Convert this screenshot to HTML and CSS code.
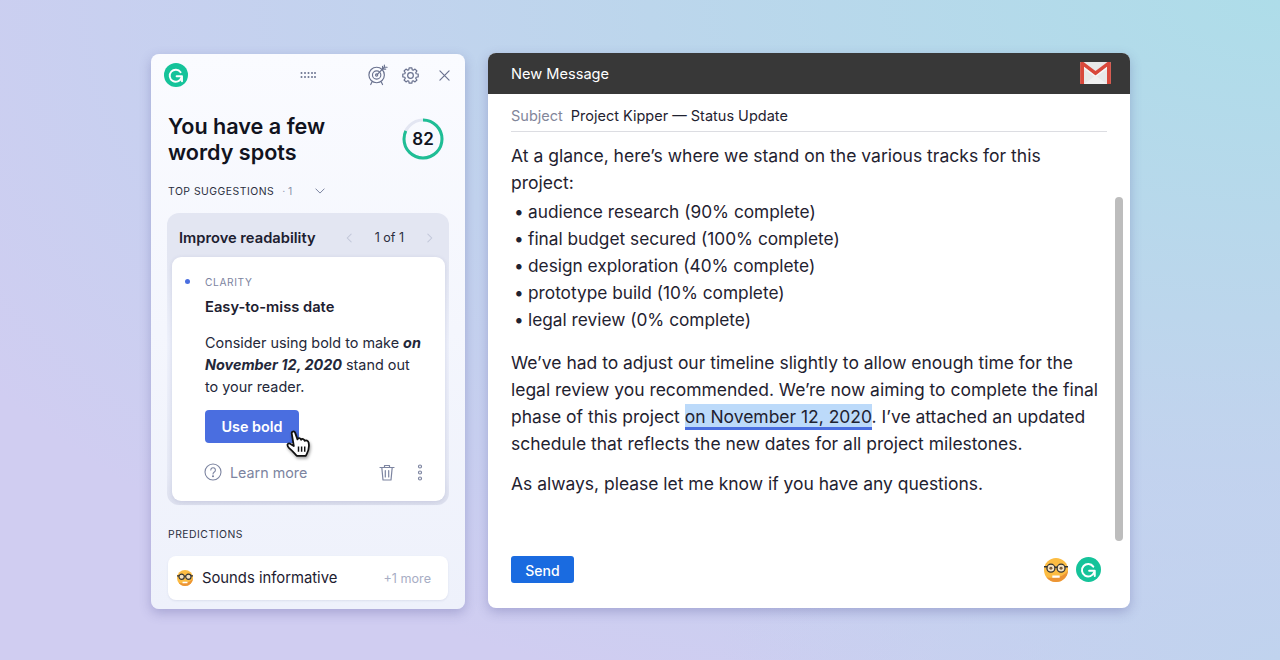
FILE: index.html
```html
<!DOCTYPE html>
<html lang="en">
<head>
<meta charset="utf-8">
<title>Grammarly</title>
<link rel="stylesheet" href="styles.css">
</head>
<body>
<main class="stage">
  <aside class="side">
    <header class="side-top">
      <svg class="g-logo" width="24" height="24" viewBox="0 0 24 24"><circle cx="12" cy="12" r="12" fill="#15c39a"/><path d="M16.600 9.200A6 6 0 1 0 17.400 14.600" fill="none" stroke="#fff" stroke-width="1.900" stroke-linecap="round"/><path d="M12.600 13.200H18V18.200" fill="none" stroke="#fff" stroke-width="1.900" stroke-linecap="round" stroke-linejoin="round"/></svg>
      <svg class="grip" width="16" height="8" viewBox="0 0 16 8"><g fill="#6b7390"><circle cx="1.500" cy="2" r="1"/><circle cx="5" cy="2" r="1"/><circle cx="8.500" cy="2" r="1"/><circle cx="12" cy="2" r="1"/><circle cx="15" cy="2" r="1"/><circle cx="1.500" cy="6" r="1"/><circle cx="5" cy="6" r="1"/><circle cx="8.500" cy="6" r="1"/><circle cx="12" cy="6" r="1"/><circle cx="15" cy="6" r="1"/></g></svg>
      <div class="top-icons">
        <svg class="target" width="20" height="22" viewBox="0 0 22 24" fill="none" stroke="#6b7390" stroke-width="1.300" stroke-linecap="round"><circle cx="9.500" cy="12" r="8.500"/><circle cx="9.500" cy="12" r="4.600"/><circle cx="9.500" cy="12" r="1.200"/><path d="M10 11.500 18 3.500M16 2.500V5.500H19.500M18 1V3.500H21M4.500 19.500 3 22.500M14.500 19.500 16 22.500"/></svg>
        <svg class="gear" width="17" height="17" viewBox="0 0 18 18" fill="none" stroke="#6b7390" stroke-width="1.300" stroke-linejoin="round"><path d="M7.560 .83 10.440 .83 10.840 2.980 11.960 3.440 13.760 2.200 15.800 4.240 14.560 6.040 15.020 7.160 17.170 7.560 17.170 10.440 15.020 10.840 14.560 11.960 15.800 13.760 13.760 15.800 11.960 14.560 10.840 15.020 10.440 17.170 7.560 17.170 7.160 15.020 6.040 14.560 4.240 15.800 2.200 13.760 3.440 11.960 2.980 10.840 .83 10.440 .83 7.560 2.980 7.160 3.440 6.040 2.200 4.240 4.240 2.200 6.040 3.440 7.160 2.980Z"/><circle cx="9" cy="9" r="3"/></svg>
        <svg class="close" width="11" height="11" viewBox="0 0 12 12" fill="none" stroke="#6b7390" stroke-width="1.300" stroke-linecap="round"><path d="M1 1 11 11M11 1 1 11"/></svg>
      </div>
    </header>

    <section class="headline">
      <h1>You have a few<br>wordy spots</h1>
      <div class="score">
        <svg width="42" height="42" viewBox="0 0 42 42" fill="none" stroke-width="3"><circle cx="21" cy="21" r="19" stroke="#e3e6f2"/><circle cx="21" cy="21" r="19" stroke="#1fbe95" pathLength="100" stroke-dasharray="82 100" class="score-arc"/></svg>
        <span>82</span>
      </div>
    </section>

    <div class="label-row">
      <span class="caps">TOP SUGGESTIONS</span><span class="count">· 1</span>
      <svg class="chev" width="10" height="6" viewBox="0 0 12 7" fill="none" stroke="#7c84a0" stroke-width="1.200" stroke-linecap="round"><path d="M1 1 6 6 11 1"/></svg>
    </div>

    <section class="group">
      <div class="group-head">
        <strong>Improve readability</strong>
        <div class="pager">
          <svg width="6" height="10" viewBox="0 0 7 11" fill="none" stroke="#c3c8da" stroke-width="1.200" stroke-linecap="round"><path d="M6 1 1.500 5.500 6 10"/></svg>
          <span>1 of 1</span>
          <svg width="6" height="10" viewBox="0 0 7 11" fill="none" stroke="#c3c8da" stroke-width="1.200" stroke-linecap="round"><path d="M1 1 5.500 5.500 1 10"/></svg>
        </div>
      </div>
      <article class="card">
        <div class="kind"><i class="dot"></i><span>CLARITY</span></div>
        <h2>Easy-to-miss date</h2>
        <p>Consider using bold to make <b>on November 12, 2020</b> stand out to your reader.</p>
        <button class="use">Use bold</button>
        <svg class="hand" width="27" height="27" viewBox="0 0 25 26"><path d="M6 3.500C5.500 1.500 8.500 .5 9.200 2.500L11.500 9C12 7.500 14.500 7.500 15 9.500 15.800 8 18.200 8.500 18.500 10.500 19.500 9.500 22 10 22.300 12.500 23 16 22 20 20.500 23L19.500 25H11C9 23 6 19.500 3.500 17.500 1 15 1.500 12.500 4 13L8 15.500Z" fill="#fff" stroke="#111" stroke-width="1.700" stroke-linejoin="round"/><path d="M12.500 16v5M15.500 16v5M18.500 16v5" stroke="#111" stroke-width="1.400" fill="none"/></svg>
        <div class="card-foot">
          <svg width="18" height="18" viewBox="0 0 18 18" fill="none" stroke="#7c84a0" stroke-width="1.100"><circle cx="9" cy="9" r="8"/><path d="M6.800 7a2.300 2.300 0 1 1 3.500 2c-.9.600-1.300 1-1.300 2" stroke-linecap="round"/><circle cx="9" cy="13.300" r=".5" fill="#7c84a0"/></svg>
          <span class="learn">Learn more</span>
          <svg class="trash" width="16" height="17" viewBox="0 0 16 17" fill="none" stroke="#7c84a0" stroke-width="1.200" stroke-linecap="round" stroke-linejoin="round"><path d="M1 3.500H15M5.500 3.500V1.500H10.500V3.500M2.800 3.500 4 16H12L13.200 3.500M6.300 6.500V13M9.700 6.500V13"/></svg>
          <svg class="more" width="6" height="17" viewBox="0 0 6 17" fill="none" stroke="#7c84a0" stroke-width="1.200"><circle cx="3" cy="2.500" r="1.500"/><circle cx="3" cy="8.500" r="1.500"/><circle cx="3" cy="14.500" r="1.500"/></svg>
        </div>
      </article>
    </section>

    <div class="caps pred-label">PREDICTIONS</div>
    <div class="pred">
      <svg width="16" height="16" viewBox="0 0 26 26"><circle cx="13" cy="13" r="13" fill="#fcbc42"/><path d="M13 26A13 13 0 0 0 26 13C23 21 8 23 2.500 20.500 5 24 8.500 26 13 26Z" fill="#ec9436"/><circle cx="7.500" cy="11" r="4.300" fill="#f4e3c2" stroke="#333" stroke-width="1.800"/><circle cx="18.500" cy="11" r="4.300" fill="#f4e3c2" stroke="#333" stroke-width="1.800"/><path d="M0 9.500h3.500M22.500 9.500H26M11.800 10H14.200" stroke="#333" stroke-width="1.800"/><path d="M9 19h8v2.500H9Z" fill="#fff"/></svg>
      <span class="pred-text">Sounds informative</span>
      <span class="pred-more">+1 more</span>
    </div>
  </aside>

  <section class="mail">
    <header class="mail-top">
      <span>New Message</span>
      <svg width="31" height="23" viewBox="0 0 32 24"><rect width="32" height="23" rx="1" fill="#e8e8e8"/><path d="M4 23V5L16 14 28 5V23H32V1.500C32 .5 31.500 0 30.500 0H28.500L16 9.500 3.500 0H1.500C.5 0 0 .5 0 1.500V23Z" fill="#d9483b"/><path d="M4 5 16 14 28 5V7L16 16 4 7Z" fill="#fff" opacity=".6"/><path d="M4 23 16 14 28 23Z" fill="#f1f1f1"/></svg>
    </header>
    <div class="mail-body">
      <div class="subject"><span class="subject-label">Subject</span><span>Project Kipper — Status Update</span></div>
      <p class="intro">At a glance, here’s where we stand on the various tracks for this project:</p>
      <ul>
        <li>audience research (90% complete)</li>
        <li>final budget secured (100% complete)</li>
        <li>design exploration (40% complete)</li>
        <li>prototype build (10% complete)</li>
        <li>legal review (0% complete)</li>
      </ul>
      <p class="para">We’ve had to adjust our timeline slightly to allow enough time for the legal review you recommended. We’re now aiming to complete the final phase of this project <mark>on November 12, 2020</mark>. I’ve attached an updated schedule that reflects the new dates for all project milestones.</p>
      <p class="para last">As always, please let me know if you have any questions.</p>
      <footer class="mail-foot">
        <button class="send">Send</button>
        <div class="foot-icons">
          <svg class="nerd" width="24" height="24" viewBox="0 0 26 26"><circle cx="13" cy="13" r="13" fill="#fcbc42"/><path d="M13 26A13 13 0 0 0 26 13C23 21 8 23 2.500 20.500 5 24 8.500 26 13 26Z" fill="#ec9436"/><circle cx="7.500" cy="11" r="4.300" fill="#f4e3c2" stroke="#333" stroke-width="1.400"/><circle cx="18.500" cy="11" r="4.300" fill="#f4e3c2" stroke="#333" stroke-width="1.400"/><circle cx="7.500" cy="11" r="1.600" fill="#7a5a3a"/><circle cx="18.500" cy="11" r="1.600" fill="#7a5a3a"/><path d="M0 9.500h3.500M22.500 9.500H26M11.800 10H14.200" stroke="#333" stroke-width="1.400"/><path d="M9 19h8v2.500H9Z" fill="#fff"/></svg>
          <svg width="25" height="25" viewBox="0 0 24 24"><circle cx="12" cy="12" r="12" fill="#15c39a"/><path d="M16.600 9.200A6 6 0 1 0 17.400 14.600" fill="none" stroke="#fff" stroke-width="1.900" stroke-linecap="round"/><path d="M12.600 13.200H18V18.200" fill="none" stroke="#fff" stroke-width="1.900" stroke-linecap="round" stroke-linejoin="round"/></svg>
        </div>
      </footer>
    </div>
    <div class="scrollbar"></div>
  </section>
</main>
</body>
</html>
```

FILE: styles.css
```css
* { box-sizing: border-box; }
html, body { margin: 0; height: 660px; overflow: hidden; }
body {
  font-family: Inter, "Liberation Sans", sans-serif;
  background:
    radial-gradient(ellipse 560px 300px at 100% 100%, #c0d3ee 0%, rgba(192, 211, 238, 0) 100%),
    radial-gradient(ellipse 1500px 760px at 100% 0, #aedde9 0%, #bcd6ec 42%, rgba(200, 208, 240, .9) 80%, rgba(208, 205, 241, 0) 100%),
    #d0cdf1;
  color: #1b1e2c;
}
.stage { display: flex; align-items: flex-start; gap: 23px; padding: 53px 0 0 151px; }

.side {
  width: 314px; height: 555px; margin-top: 1px; border-radius: 8px; overflow: hidden;
  background: linear-gradient(180deg, #fafbff 0%, #eef1fb 100%);
  box-shadow: 0 4px 12px rgba(80, 80, 150, .32);
  padding: 9px 17px 0;
}
.side-top { display: flex; align-items: center; height: 24px; margin-left: -4px; }
.grip { margin-left: 112px; }
.top-icons { display: flex; align-items: center; margin-left: auto; margin-right: -2px; }
.gear { margin-left: 14px; }
.close { margin-left: 20px; }

.headline { display: flex; justify-content: space-between; align-items: center; margin-top: 26px; padding-right: 4px; }
h1 { margin: 0; font-size: 21.6px; line-height: 26px; font-weight: 600; color: #111320; }
.score { position: relative; width: 42px; height: 42px; }
.score svg { display: block; }
.score span { position: absolute; inset: 0; display: flex; align-items: center; justify-content: center; font-size: 17px; font-weight: 600; color: #111320; }
.score-arc { transform-origin: 21px 21px; transform: rotate(-90deg); }

.label-row { display: flex; align-items: center; margin-top: 19px; height: 14px; }
.caps { font-size: 10.4px; letter-spacing: .5px; color: #2b2f40; }
.count { font-size: 10.4px; color: #8b92aa; margin-left: 8px; }
.chev { margin-left: 23px; }

.group { margin: 15px 0 0 -1px; width: 282px; border-radius: 12px; background: linear-gradient(180deg, #e3e6f2 0, #e3e6f2 44px, #eef1fb 45%, #e6e9f5 90%, #dde0ee 100%); padding: 0 4px 4px 5px; }
.group-head { display: flex; align-items: center; justify-content: space-between; height: 44px; padding: 5px 12px 0 7px; }
.group-head strong { font-size: 14.7px; font-weight: 600; color: #1d2030; }
.pager { display: flex; align-items: center; gap: 23px; font-size: 12.5px; color: #2b2f40; }
.card { position: relative; background: #fff; border-radius: 9px; height: 244px; padding: 18px 21px 0 33px; box-shadow: 0 1px 4px rgba(120, 125, 170, .22); }
.kind { position: relative; font-size: 10.2px; letter-spacing: .6px; color: #7c84a0; height: 14px; line-height: 14px; }
.dot { position: absolute; left: -20px; top: 4px; width: 5px; height: 5px; border-radius: 50%; background: #4a6ee0; }
h2 { margin: 8px 0 0; font-size: 14.7px; line-height: 20px; font-weight: 600; color: #1d2030; }
.card p { margin: 15px 0 0; font-size: 14.4px; line-height: 22px; color: #24283a; }
.card p b { font-weight: 700; font-style: italic; }
.use { display: block; margin-top: 12px; width: 94px; height: 33px; border: 0; border-radius: 4px; background: #4a6ee0; color: #fff; font: 600 14.4px Inter, sans-serif; }
.hand { position: absolute; left: 113px; top: 173px; filter: drop-shadow(1px 2px 1.5px rgba(0, 0, 0, .35)); }
.card-foot { display: flex; align-items: center; margin-top: 20px; height: 18px; margin-left: -1px; }
.learn { margin-left: 8px; font-size: 14.3px; color: #7c84a0; }
.trash { margin-left: auto; }
.more { margin-left: 22px; margin-right: 1px; }

.pred-label { margin-top: 23px; line-height: 14px; }
.pred { display: flex; align-items: center; height: 44px; margin: 14px 0 0 0; padding: 0 17px 0 9px; background: #fff; border-radius: 8px; width: 280px; box-shadow: 0 1px 2px rgba(120, 125, 170, .15); }
.pred-text { margin-left: 9px; font-size: 14.8px; color: #1d2030; }
.pred-more { margin-left: auto; font-size: 12.6px; color: #a7adc4; }

.mail { position: relative; width: 642px; height: 555px; border-radius: 8px; overflow: hidden; background: #fff; box-shadow: 0 4px 12px rgba(80, 80, 150, .32); }
.mail-top { display: flex; align-items: center; justify-content: space-between; height: 41px; padding: 0 19px 0 23px; background: #383838; color: #fff; font-size: 14.6px; font-weight: 400; }
.mail-body { position: relative; padding: 0 23px; height: 514px; font-size: 17.45px; line-height: 27px; color: #1f2230; }
.subject { display: flex; gap: 8px; align-items: center; height: 38px; padding-top: 6px; border-bottom: 1px solid #dcdde2; font-size: 14.5px; }
.subject-label { color: #82869a; }
.intro { margin: 10px 0 0; padding-right: 20px; font-size: 17.55px; }
ul { margin: 2px 0 0; padding: 0 0 0 17px; list-style: none; font-size: 17.27px; }
li { position: relative; }
li::before { content: "•"; position: absolute; left: -14px; }
.para { margin: 16px 0 0; font-size: 17.47px; }
.para.last { margin-top: 13px; font-size: 17.45px; }
mark { padding: 2px 0 3px; background: #bcdafa; color: inherit; box-shadow: inset 0 -3px 0 #4a6ee0; }
.mail-foot { position: absolute; left: 23px; right: 29px; bottom: 25px; display: flex; align-items: center; justify-content: space-between; }
.send { width: 63px; height: 27px; padding: 1px 0 0; border: 0; border-radius: 3px; background: #1a6be0; color: #fff; font: 500 14px Inter, sans-serif; }
.foot-icons { display: flex; gap: 8px; align-items: center; }
.nerd { margin-top: 1px; }
.scrollbar { position: absolute; right: 7px; top: 144px; width: 8px; height: 344px; border-radius: 4px; background: #bdbdbd; }
```
